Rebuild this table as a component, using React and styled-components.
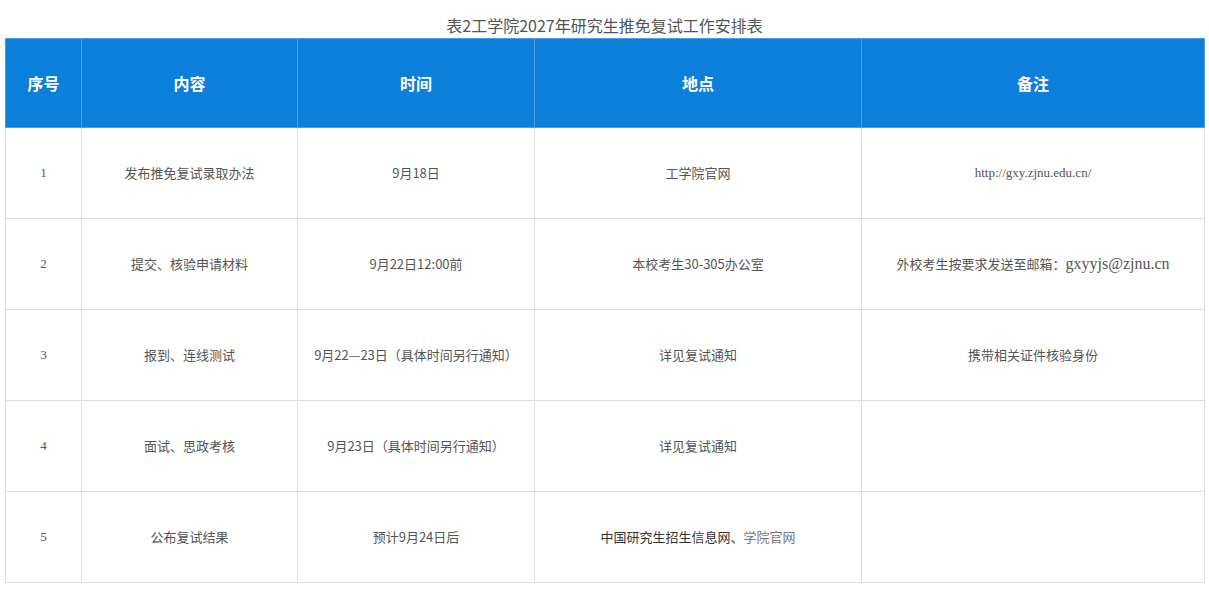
import React from "react";
import styled, { createGlobalStyle } from "styled-components";

const Global = createGlobalStyle`
  html, body { margin: 0; padding: 0; background: #fff; }
  body { font-family: "Noto Sans CJK SC", "Noto Sans", sans-serif; }
`;

const Page = styled.div`
  padding: 0 5px 10px 5px;
`;

const Title = styled.div`
  padding-top: 12px;
  height: 26px;
  line-height: 26px;
  text-align: center;
  font-size: 16px;
  color: #555;
  font-family: "Noto Sans CJK SC", sans-serif;
`;

const Table = styled.table`
  width: 1199px;
  border-collapse: collapse;
  table-layout: fixed;
`;

const Th = styled.th`
  background: #0c7fda;
  color: #fff;
  font-size: 16px;
  font-weight: bold;
  height: 88px;
  padding: 0;
  border: 1px solid #4b9fe3;
  text-align: center;
  vertical-align: middle;
`;

const Td = styled.td`
  height: 90px;
  padding: 0 4px;
  border: 1px solid #dddddd;
  text-align: center;
  vertical-align: middle;
  font-size: ${(p) => (p.$size ? p.$size : "13px")};
  color: ${(p) => (p.$dark ? "#333" : "#555")};
  font-family: ${(p) =>
    p.$serif
      ? '"Liberation Serif", "Noto Sans CJK SC", serif'
      : '"Noto Sans CJK SC", sans-serif'};
  line-height: 1.4;
`;

const Serif = styled.span`
  font-family: "Liberation Serif", serif;
  font-size: ${(p) => p.$size || "16px"};
`;

const Gray = styled.span`
  color: #777;
`;

const cols = [76, 216, 237, 327, 343];
const headers = ["序号", "内容", "时间", "地点", "备注"];

const rows = [
  ["1", "发布推免复试录取办法", "9月18日", "工学院官网", "url"],
  ["2", "提交、核验申请材料", "9月22日12:00前", "本校考生30-305办公室", "email"],
  ["3", "报到、连线测试", "9月22—23日（具体时间另行通知）", "详见复试通知", "携带相关证件核验身份"],
  ["4", "面试、思政考核", "9月23日（具体时间另行通知）", "详见复试通知", ""],
  ["5", "公布复试结果", "预计9月24日后", "last", ""],
];

function Note({ v }) {
  if (v === "url") return <Td $serif>http://gxy.zjnu.edu.cn/</Td>;
  if (v === "email")
    return (
      <Td>
        外校考生按要求发送至邮箱：<Serif>gxyyjs@zjnu.cn</Serif>
      </Td>
    );
  return <Td>{v}</Td>;
}

export default function App() {
  return (
    <Page>
      <Global />
      <Title>表2工学院2027年研究生推免复试工作安排表</Title>
      <Table>
        <colgroup>
          {cols.map((w, i) => (
            <col key={i} style={{ width: w }} />
          ))}
        </colgroup>
        <thead>
          <tr>
            {headers.map((h) => (
              <Th key={h}>{h}</Th>
            ))}
          </tr>
        </thead>
        <tbody>
          {rows.map((r) => (
            <tr key={r[0]}>
              <Td $serif>{r[0]}</Td>
              <Td>{r[1]}</Td>
              <Td>{r[2]}</Td>
              {r[3] === "last" ? (
                <Td $dark>
                  中国研究生招生信息网、<Gray>学院官网</Gray>
                </Td>
              ) : (
                <Td>{r[3]}</Td>
              )}
              <Note v={r[4]} />
            </tr>
          ))}
        </tbody>
      </Table>
    </Page>
  );
}
